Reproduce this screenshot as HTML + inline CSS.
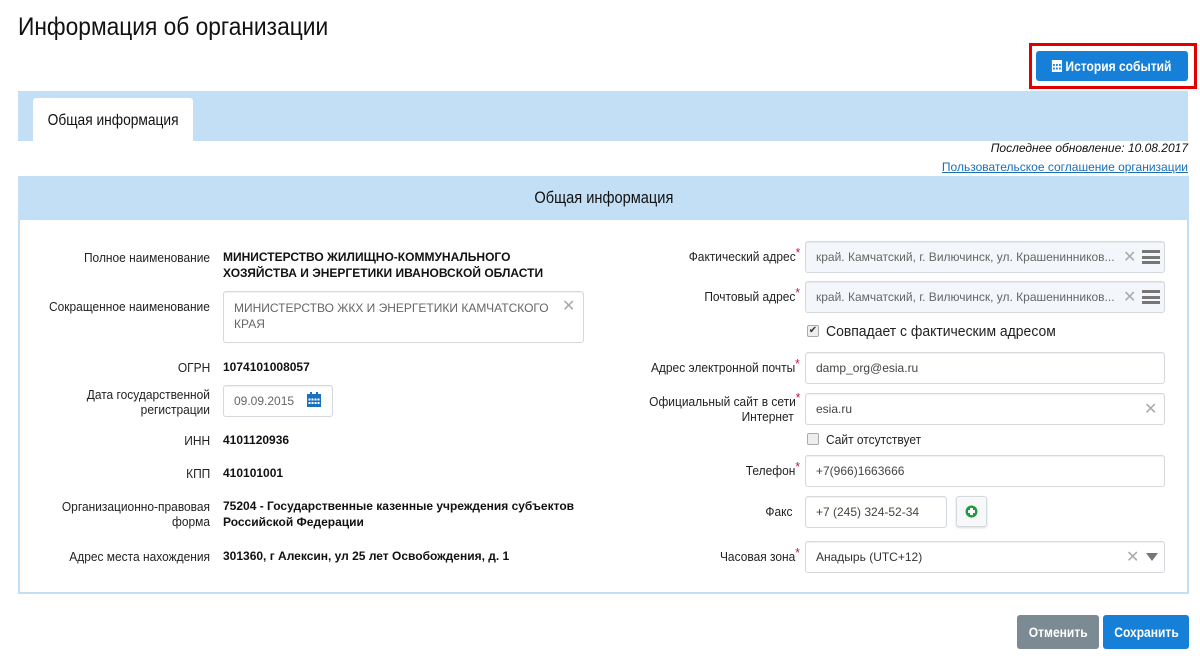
<!DOCTYPE html>
<html><head><meta charset="utf-8"><style>
*{box-sizing:border-box;margin:0;padding:0}
body{width:1200px;height:664px;background:#fff;position:relative;font-family:"Liberation Sans",sans-serif;color:#111;overflow:hidden}
.a{position:absolute}
.lbl{position:absolute;text-align:right;font-size:13px;line-height:15px;color:#222;transform:scaleX(.92);transform-origin:right center}
.val{position:absolute;font-weight:bold;font-size:12px;line-height:16px;color:#111}
.inp{position:absolute;border:1px solid #d5d9dd;border-radius:3px;background:#fff;font-size:12px;color:#444;padding-left:10px;box-shadow:inset 0 1px 1px rgba(0,0,0,.06)}
.st{color:#c0143c;font-size:13px;position:relative;top:-4px}
.x{position:absolute;color:#aaa;font-family:"DejaVu Sans",sans-serif;font-size:16px;font-weight:200}
.ham{position:absolute;width:18px;height:14px;border-top:3px solid #777;border-bottom:3px solid #777}
.ham:after{content:"";position:absolute;left:0;right:0;top:2.5px;height:3px;background:#777}
.cb{position:absolute;width:12px;height:12px;border:1px solid #aaa;border-radius:2px;background:#eee}
.n{display:inline-block;transform:scaleX(.86)}
</style></head><body>
<div class="a" style="left:18px;top:12px;font-size:25px;line-height:30px;color:#111;transform:scaleX(.91);transform-origin:left">Информация об организации</div>
<div class="a" style="left:1029px;top:43px;width:168px;height:46px;border:3px solid #e00000"></div>
<div class="a" style="left:1036px;top:51px;width:152px;height:30px;background:#1680d8;border-radius:3px;color:#fff;font-size:14px;font-weight:bold;line-height:30px;text-align:center;white-space:nowrap">
<span class="n"><svg width="12" height="13" viewBox="0 0 12 13" style="vertical-align:-1px"><rect x="0" y="1" width="12" height="12" fill="#fff"/><g fill="#1680d8"><rect x="1.5" y="5" width="2" height="2"/><rect x="5" y="5" width="2" height="2"/><rect x="8.5" y="5" width="2" height="2"/><rect x="1.5" y="8.5" width="2" height="2"/><rect x="5" y="8.5" width="2" height="2"/><rect x="8.5" y="8.5" width="2" height="2"/></g></svg> История событий</span></div>
<div class="a" style="left:18px;top:91px;width:1170px;height:50px;background:#c2dff5"></div>
<div class="a" style="left:33px;top:98px;width:160px;height:43px;background:#fff;border-radius:3px 3px 0 0;font-size:16px;line-height:45px;text-align:center;color:#111;white-space:nowrap"><span class="n">Общая информация</span></div>
<div class="a" style="right:12px;top:141px;font-style:italic;font-size:12px;line-height:14px;color:#111">Последнее обновление: 10.08.2017</div>
<div class="a" style="right:12px;top:160px;font-size:12px;line-height:14px;color:#1a6fb5;text-decoration:underline">Пользовательское соглашение организации</div>
<div class="a" style="left:18px;top:176px;width:1171px;height:418px;border:2px solid #c2dff5;border-top:0"></div>
<div class="a" style="left:18px;top:176px;width:1171px;height:44px;background:#c2dff5;text-align:center;font-size:17px;line-height:44px;color:#111"><span class="n">Общая информация</span></div>

<div class="lbl" style="right:990px;top:250px">Полное наименование</div>
<div class="val" style="left:223px;top:249px">МИНИСТЕРСТВО ЖИЛИЩНО-КОММУНАЛЬНОГО<br>ХОЗЯЙСТВА И ЭНЕРГЕТИКИ ИВАНОВСКОЙ ОБЛАСТИ</div>
<div class="lbl" style="right:990px;top:299px">Сокращенное наименование</div>
<div class="inp" style="left:223px;top:291px;width:361px;height:52px;padding-top:8px;line-height:16px;color:#666">МИНИСТЕРСТВО ЖКХ И ЭНЕРГЕТИКИ КАМЧАТСКОГО<br>КРАЯ</div>
<div class="x" style="left:562px;top:296px">✕</div>
<div class="lbl" style="right:990px;top:360px">ОГРН</div>
<div class="val" style="left:223px;top:359px">1074101008057</div>
<div class="lbl" style="right:990px;top:387px">Дата государственной<br>регистрации</div>
<div class="inp" style="left:223px;top:385px;width:110px;height:32px;line-height:30px;color:#666">09.09.2015</div>
<svg class="a" style="left:306px;top:392px" width="16" height="16" viewBox="0 0 16 16"><rect x="1" y="2" width="14" height="13" fill="#1a6fc0"/><rect x="4" y="0" width="2" height="4" fill="#1a6fc0"/><rect x="10" y="0" width="2" height="4" fill="#1a6fc0"/><g fill="#fff"><rect x="2.5" y="6.5" width="2" height="2"/><rect x="5.5" y="6.5" width="2" height="2"/><rect x="8.5" y="6.5" width="2" height="2"/><rect x="11.5" y="6.5" width="2" height="2"/><rect x="2.5" y="10" width="2" height="2"/><rect x="5.5" y="10" width="2" height="2"/><rect x="8.5" y="10" width="2" height="2"/><rect x="11.5" y="10" width="2" height="2"/></g></svg>
<div class="lbl" style="right:990px;top:433px">ИНН</div>
<div class="val" style="left:223px;top:432px">4101120936</div>
<div class="lbl" style="right:990px;top:466px">КПП</div>
<div class="val" style="left:223px;top:465px">410101001</div>
<div class="lbl" style="right:990px;top:499px">Организационно-правовая<br>форма</div>
<div class="val" style="left:223px;top:498px">75204 - Государственные казенные учреждения субъектов<br>Российской Федерации</div>
<div class="lbl" style="right:990px;top:549px">Адрес места нахождения</div>
<div class="val" style="left:223px;top:548px">301360, г Алексин, ул 25 лет Освобождения, д. 1</div>

<div class="lbl" style="right:400px;top:249px">Фактический адрес<span class="st">*</span></div>
<div class="inp" style="left:805px;top:241px;width:360px;height:32px;line-height:30px;background:#f3f6fa;color:#666">край. Камчатский, г. Вилючинск, ул. Крашенинников...</div>
<div class="x" style="left:1123px;top:247px">✕</div><div class="ham" style="left:1142px;top:250px"></div>
<div class="lbl" style="right:400px;top:289px">Почтовый адрес<span class="st">*</span></div>
<div class="inp" style="left:805px;top:281px;width:360px;height:32px;line-height:30px;background:#f3f6fa;color:#666">край. Камчатский, г. Вилючинск, ул. Крашенинников...</div>
<div class="x" style="left:1123px;top:287px">✕</div><div class="ham" style="left:1142px;top:290px"></div>
<div class="cb" style="left:807px;top:325px;font-size:10px;line-height:10px;text-align:center;color:#333">✔</div>
<div class="a" style="left:826px;top:323px;font-size:15px;line-height:17px;color:#222;transform:scaleX(.93);transform-origin:left">Совпадает с фактическим адресом</div>
<div class="lbl" style="right:400px;top:360px">Адрес электронной почты<span class="st">*</span></div>
<div class="inp" style="left:805px;top:352px;width:360px;height:32px;line-height:30px">damp_org@esia.ru</div>
<div class="lbl" style="right:400px;top:394px">Официальный сайт в сети<span class="st">*</span><br>Интернет&nbsp;&nbsp;</div>
<div class="inp" style="left:805px;top:393px;width:360px;height:32px;line-height:30px">esia.ru</div>
<div class="x" style="left:1144px;top:399px">✕</div>
<div class="cb" style="left:807px;top:433px"></div>
<div class="a" style="left:826px;top:432px;font-size:13px;line-height:15px;color:#222;transform:scaleX(.92);transform-origin:left">Сайт отсутствует</div>
<div class="lbl" style="right:400px;top:463px">Телефон<span class="st">*</span></div>
<div class="inp" style="left:805px;top:455px;width:360px;height:32px;line-height:30px">+7(966)1663666</div>
<div class="lbl" style="right:408px;top:504px">Факс</div>
<div class="inp" style="left:805px;top:496px;width:142px;height:32px;line-height:30px">+7 (245) 324-52-34</div>
<div class="a" style="left:956px;top:496px;width:31px;height:31px;border:1px solid #d5d9dd;border-radius:3px;background:#f6f8fa;box-shadow:0 1px 2px rgba(0,0,0,.15)"><svg width="29" height="29" viewBox="0 0 29 29"><circle cx="14.5" cy="14.5" r="6" fill="#1a9e3a"/><rect x="13" y="11" width="3" height="7" fill="#fff"/><rect x="11" y="13" width="7" height="3" fill="#fff"/></svg></div>
<div class="lbl" style="right:400px;top:549px">Часовая зона<span class="st">*</span></div>
<div class="inp" style="left:805px;top:541px;width:360px;height:32px;line-height:30px;color:#333">Анадырь (UTC+12)</div>
<div class="x" style="left:1126px;top:547px">✕</div>
<div class="a" style="left:1146px;top:553px;width:0;height:0;border-left:6px solid transparent;border-right:6px solid transparent;border-top:8px solid #777"></div>

<div class="a" style="left:1017px;top:615px;width:82px;height:34px;background:#7b8a93;border-radius:3px;color:#fff;font-size:14px;font-weight:bold;line-height:34px;text-align:center;white-space:nowrap"><span class="n">Отменить</span></div>
<div class="a" style="left:1103px;top:615px;width:86px;height:34px;background:#1680d8;border-radius:3px;color:#fff;font-size:14px;font-weight:bold;line-height:34px;text-align:center;white-space:nowrap"><span class="n">Сохранить</span></div>
</body></html>
